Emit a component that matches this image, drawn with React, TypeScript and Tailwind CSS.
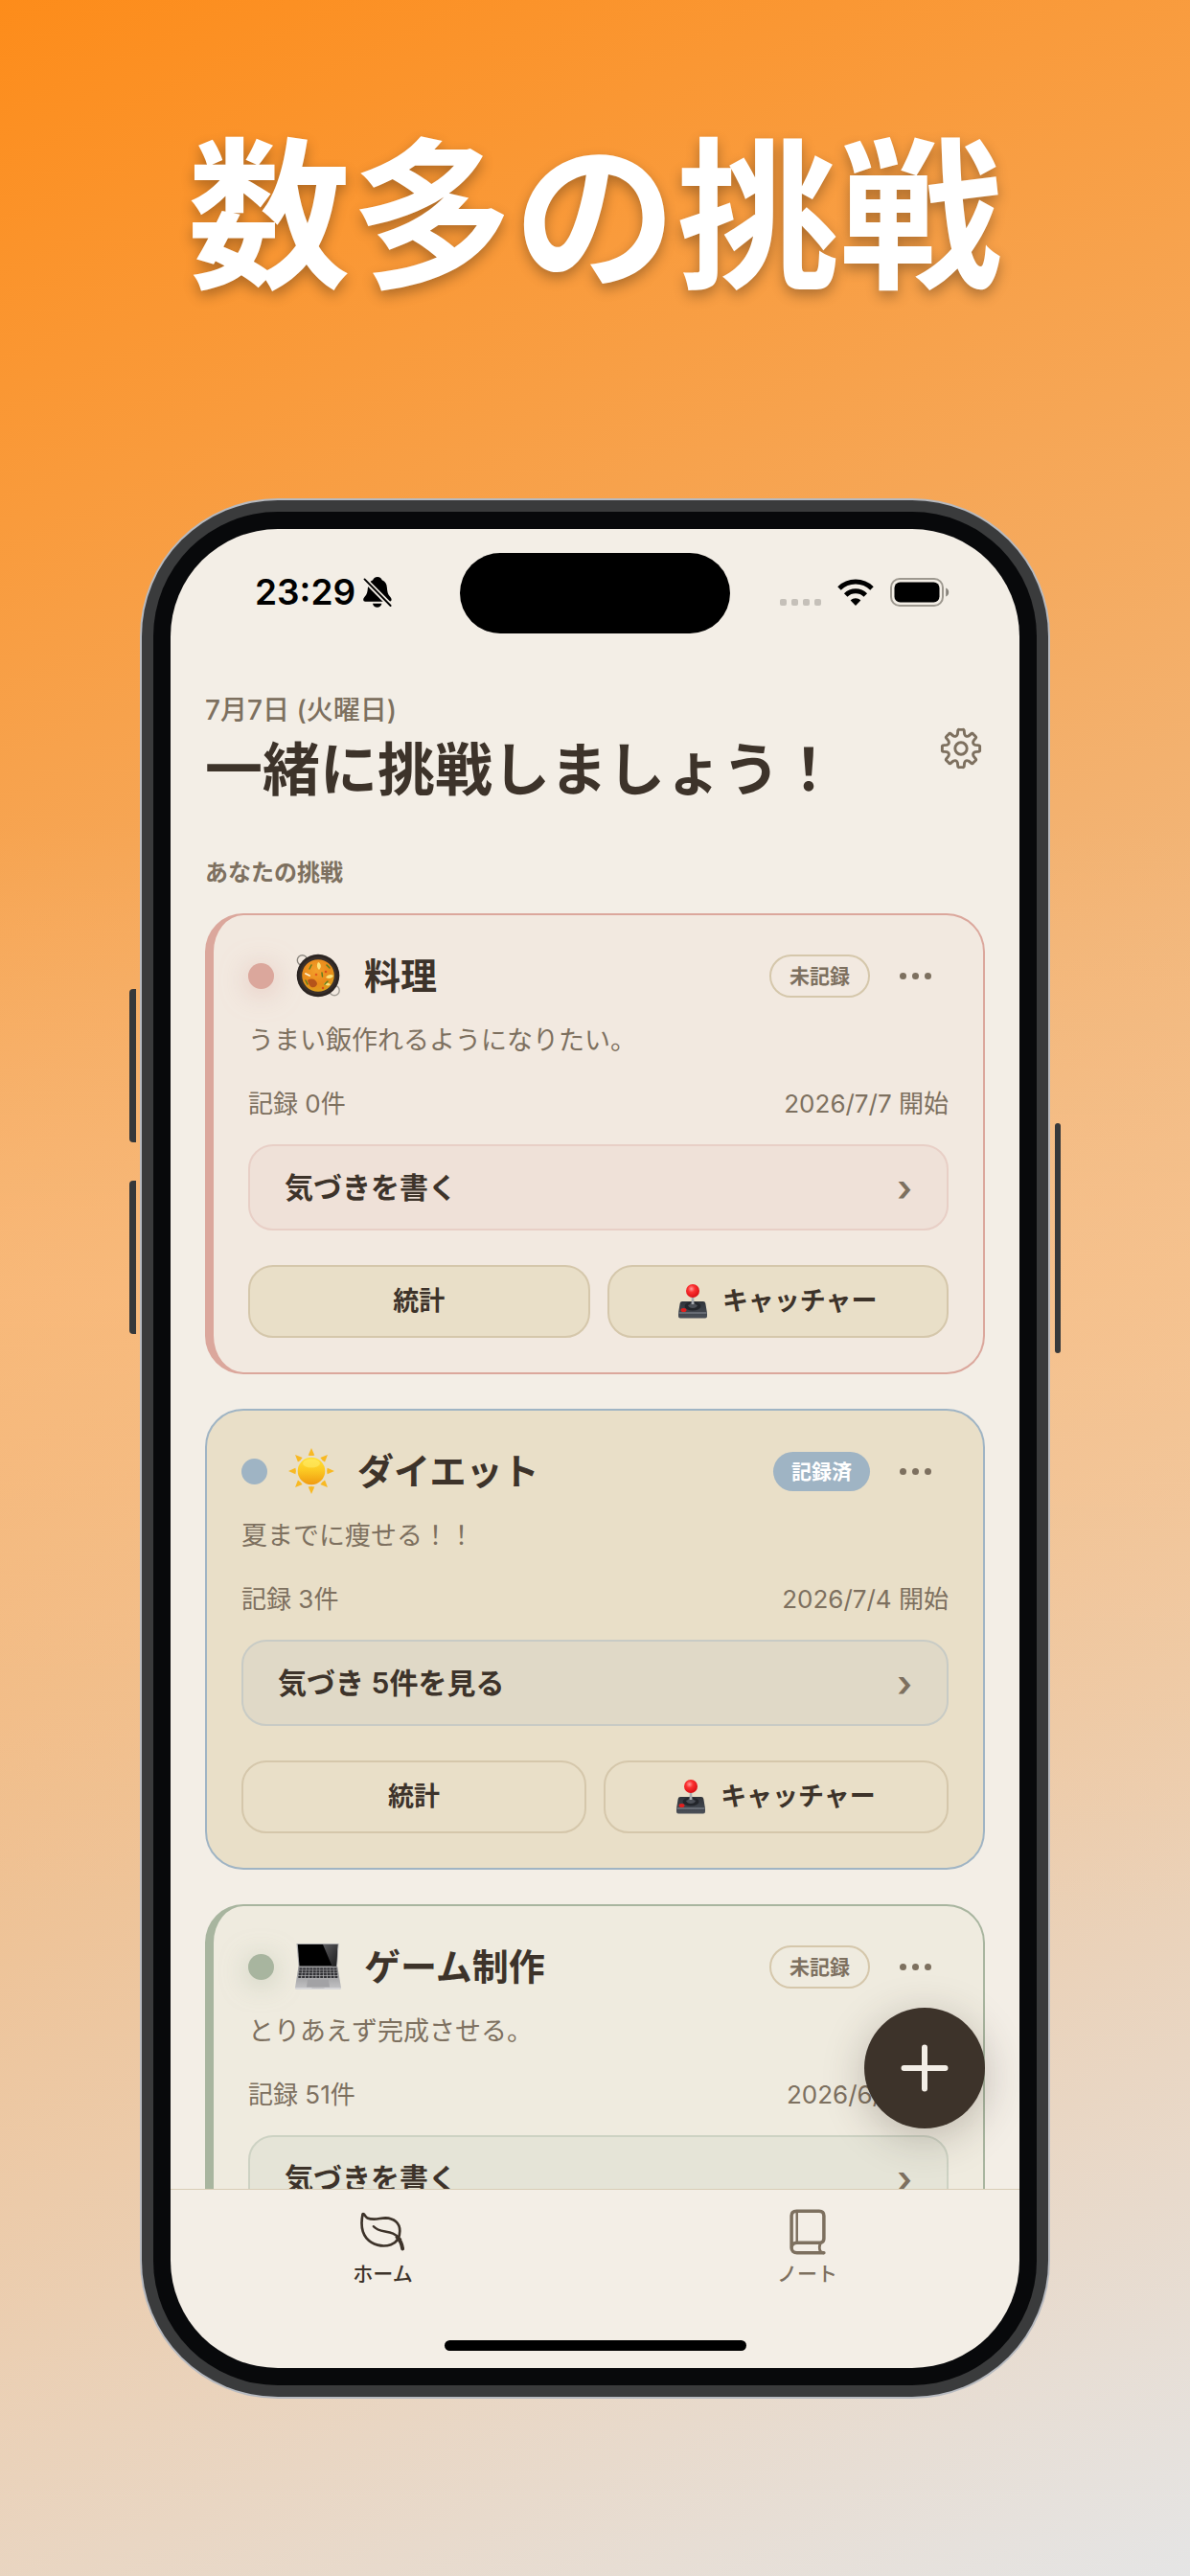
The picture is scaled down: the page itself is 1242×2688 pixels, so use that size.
import React from "react";

type Theme = {
  card: string;
  dot: string;
  note: string;
};

type Challenge = {
  icon: React.ReactNode;
  title: string;
  done: boolean;
  description: string;
  count: number;
  start: string;
  noteLabel: string;
  hasActions: boolean;
  theme: Theme;
};

function BellOff() {
  return (
    <svg viewBox="0 0 30 32" className="h-8 w-[30px]" aria-hidden="true">
      <path
        d="M15 0c2.500 0 4.200 1.500 4.700 3.300 3.300 1.300 5 4.300 5.200 8 .2 4.200 1 6.700 2.700 8.800 1.200 1.400 2 2.500 2 3.700 0 1.200-.9 1.900-2.200 1.900H2.300C1 25.700.2 25 .2 23.800c0-1.200.8-2.300 2-3.700 1.700-2.100 2.500-4.600 2.700-8.800.2-3.700 2-6.700 5.300-8C10.700 1.500 12.500 0 15 0Z"
        fill="#000"
      />
      <path d="M10 27.700h9.400c-.6 2.400-2.300 4-4.700 4s-4.200-1.600-4.700-4Z" fill="#000" />
      <path d="M1.500 2.600 28.600 30" stroke="#f3eee6" strokeWidth="5.400" />
      <path d="M1.500 2.400 28.600 30" stroke="#000" strokeWidth="1.900" strokeLinecap="round" />
    </svg>
  );
}

function Wifi() {
  return (
    <svg viewBox="0 0 38 28" className="h-7 w-[38px]" fill="none" aria-hidden="true">
      <path d="M2 10a24.300 24.300 0 0 1 34 0" stroke="#000" strokeWidth="5" />
      <path d="M8.700 17a14.700 14.700 0 0 1 20.600 0" stroke="#000" strokeWidth="5" />
      <path d="M19 28l-5.300-5.400c2.800-3 7.800-3 10.600 0Z" fill="#000" />
    </svg>
  );
}

function Battery() {
  return (
    <svg viewBox="0 0 62 30" className="h-[30px] w-[62px]" fill="none" aria-hidden="true">
      <rect x="1" y="1" width="54" height="28" rx="9" stroke="#9d988f" strokeWidth="2" />
      <rect x="4.500" y="4.500" width="47" height="21" rx="6" fill="#000" />
      <path d="M58.200 10.500c2 .6 3 2.400 3 4.500s-1 3.900-3 4.500Z" fill="#87837b" />
    </svg>
  );
}

function Gear() {
  const polar = (r: number, deg: number) => {
    const a = ((deg - 90) * Math.PI) / 180;
    return `${(r * Math.cos(a)).toFixed(2)} ${(r * Math.sin(a)).toFixed(2)}`;
  };
  let d = "";
  for (let i = 0; i < 8; i++) {
    const c = i * 45;
    d += `${i === 0 ? "M" : "L"}${polar(17.500, c - 11)} Q${polar(20.300, c - 10)} ${polar(19.700, c - 5)} L${polar(19.700, c + 5)} Q${polar(20.300, c + 10)} ${polar(17.500, c + 11)} L${polar(15.200, c + 14)} Q${polar(12.600, c + 22.500)} ${polar(15.200, c + 31)} `;
  }
  return (
    <svg viewBox="-22 -22 44 44" className="size-11" fill="none" stroke="#7d705f" strokeWidth="2.900" strokeLinejoin="round" aria-hidden="true">
      <path d={d + "Z"} />
      <circle r="6.200" />
    </svg>
  );
}

function Leaf() {
  return (
    <svg viewBox="0 0 132 118" className="h-[42px] w-[47px]" fill="none" stroke="#3d332a" strokeWidth="7.500" strokeLinecap="round" strokeLinejoin="round" aria-hidden="true">
      <path d="M7 7C1 38 4 60 18 77c17 20 47 28 72 19 19-7 26-22 26-40 0-24-18-37-42-38-17 0-34 8-53 0C14 15 11 3 7 7Z" />
      <path d="M39 43c20 23 54 5 79 38" strokeWidth="7" />
      <path d="M108 74c9 9 14 20 16 34" strokeWidth="11" />
    </svg>
  );
}

function Book() {
  return (
    <svg viewBox="0 0 108 136" className="h-12 w-[38px]" fill="none" stroke="#7d705f" strokeLinecap="round" strokeLinejoin="round" aria-hidden="true">
      <path d="M6 116V20C6 10 12 6 21 6h67c9 0 14 5 14 14v68c0 7-3 11-10 12H22c-9 0-16 5-16 15s7 15 16 15h80" strokeWidth="10" />
      <path d="M22 8v91" strokeWidth="7" />
      <path d="M92 101c-4 9-4 18 0 25l8 4" strokeWidth="8" />
    </svg>
  );
}

function PanEmoji() {
  return (
    <svg viewBox="0 0 48 48" className="size-12" fill="none" aria-hidden="true">
      <defs>
        <radialGradient id="curry" cx="0.45" cy="0.35" r="0.7">
          <stop offset="0" stopColor="#f3a02c" />
          <stop offset="0.6" stopColor="#e98a1a" />
          <stop offset="1" stopColor="#d9a21c" />
        </radialGradient>
      </defs>
      <circle cx="7.500" cy="8" r="5.200" stroke="#8d8880" strokeWidth="1.400" />
      <circle cx="41" cy="39.500" r="5.200" stroke="#a39e96" strokeWidth="1.400" />
      <circle cx="24" cy="24" r="22.300" fill="#2c2522" />
      <circle cx="24" cy="24" r="19.500" fill="#3a302b" />
      <circle cx="24" cy="24" r="16.800" fill="url(#curry)" />
      <path d="M13 29c4-3 9-1 10 3 0 3-3 5-6 4-2-1-3-4-4-7Z" fill="#b5541a" />
      <path d="M24 10c3 1 4 5 1 8-2-2-3-5-1-8ZM40 24c-1 3-5 4-8 2 2-3 5-4 8-2ZM37 34c-3 1-6 0-7-2 3-1 6-1 7 2Z" fill="#fbe27b" />
      <path d="m17 13-2 4M28 21l.5 4M34 30l-3 3M33 13l3 3M11 29l2 4" stroke="#5f7d1f" strokeWidth="1.500" strokeLinecap="round" />
      <path d="m11 22 4 2" stroke="#fff0cf" strokeWidth="1.800" strokeLinecap="round" />
      <circle cx="22" cy="23" r="1.300" fill="#e35a1c" />
      <circle cx="32" cy="20" r="1.300" fill="#d9501a" />
      <circle cx="29" cy="37" r="1.200" fill="#d9501a" />
    </svg>
  );
}

function SunEmoji() {
  return (
    <svg viewBox="-24 -24 48 48" className="size-12" aria-hidden="true">
      <defs>
        <linearGradient id="sun" x1="0" y1="0" x2="0" y2="1">
          <stop offset="0" stopColor="#ffe03a" />
          <stop offset="0.45" stopColor="#fccb24" />
          <stop offset="1" stopColor="#f09a10" />
        </linearGradient>
      </defs>
      {[0, 45, 90, 135, 180, 225, 270, 315].map((a) => (
        <path key={a} d="M0-24 3.300-16.600Q0-15.600-3.300-16.600Z" fill="#f8b923" transform={`rotate(${a})`} />
      ))}
      <circle r="14.300" fill="url(#sun)" />
      <ellipse cy="-8" rx="9" ry="4.500" fill="#fff176" opacity="0.5" />
    </svg>
  );
}

function LaptopEmoji() {
  const keys = [0, 1, 2, 3, 4, 5, 6, 7, 8, 9, 10];
  return (
    <svg viewBox="0 0 48 48" className="size-12" aria-hidden="true">
      <defs>
        <linearGradient id="deck" x1="0" y1="0" x2="0" y2="1">
          <stop offset="0" stopColor="#8c8c8e" />
          <stop offset="1" stopColor="#c4c4c6" />
        </linearGradient>
        <linearGradient id="glare" x1="0" y1="0" x2="1" y2="1">
          <stop offset="0" stopColor="#5d5d5f" />
          <stop offset="1" stopColor="#1c1c1d" />
        </linearGradient>
      </defs>
      <path d="M1.500 0h44l-1.500 24H3.500Z" fill="#a9a9ab" />
      <path d="M2.800 1h41.500l-1.300 22.500H4.500Z" fill="#000" />
      <path d="M29 1h15.300L43 23.500h-4.500Z" fill="url(#glare)" />
      <path d="M3.500 24h40.700L48 46q0 2-2 2H2q-2 0-2-2Z" fill="url(#deck)" />
      {[0, 1, 2, 3].map((r) =>
        keys.map((k) => (
          <rect key={`${r}-${k}`} x={4.500 - r * 0.4 + k * (3.600 + r * 0.07)} y={25.500 + r * 2.800} width="3" height="2.100" rx="0.4" fill="#323236" />
        )),
      )}
      <path d="M13 37.500h22l1 8H12Z" fill="#a2a2a5" />
      <path d="M0 46h17l1 1h12l1-1h17q0 2-2 2H2q-2 0-2-2Z" fill="#d6d6d8" />
    </svg>
  );
}

function JoystickEmoji() {
  return (
    <svg viewBox="0 0 30 36" className="h-9 w-[30px]" aria-hidden="true">
      <defs>
        <linearGradient id="stickBase" x1="0" y1="0" x2="0" y2="1">
          <stop offset="0" stopColor="#30343a" />
          <stop offset="1" stopColor="#4b5058" />
        </linearGradient>
        <radialGradient id="knob" cx="0.4" cy="0.35" r="0.65">
          <stop offset="0" stopColor="#ff9a9a" />
          <stop offset="0.4" stopColor="#fb3030" />
          <stop offset="1" stopColor="#d90f14" />
        </radialGradient>
      </defs>
      <path d="M4 18h22q2 0 2.300 2L30 30v3.500q0 2-2 2H2q-2 0-2-2V30l1.700-10Q2 18 4 18Z" fill="url(#stickBase)" />
      <path d="M.5 30h29" stroke="#8b9099" strokeWidth="1" />
      <ellipse cx="15" cy="23" rx="8.500" ry="4.500" fill="#23262b" />
      <path d="M10 22q4-1.500 4-5h2q0 3.500 4 5-1 3-5 3t-5-3Z" fill="#4c5057" />
      <rect x="13.700" y="12" width="2.600" height="9" fill="#a7abb0" />
      <circle cx="15" cy="7" r="7" fill="url(#knob)" />
      <ellipse cx="5.500" cy="27" rx="3" ry="2" fill="#e0201f" />
    </svg>
  );
}

const pink: Theme = {
  card: "border-[#dba79c] border-l-[9px] bg-[#f2e9e0]",
  dot: "bg-[#dba79c] shadow-[0_4px_28px_#dba79c99]",
  note: "border-[#e8cfc6] bg-[#efe1d8]",
};
const blue: Theme = {
  card: "border-[#9fb4c4] bg-[#e9dfc8]",
  dot: "bg-[#9fb4c4]",
  note: "border-[#c8cbc5] bg-[#e0d9c7]",
};
const green: Theme = {
  card: "border-[#a8b59f] border-l-[9px] bg-[#efebdf]",
  dot: "bg-[#a8b59f] shadow-[0_4px_28px_#a8b59f99]",
  note: "border-[#cdd2c3] bg-[#e5e4d7]",
};

const challenges: Challenge[] = [
  { icon: <PanEmoji />, title: "料理", done: false, description: "うまい飯作れるようになりたい。", count: 0, start: "2026/7/7", noteLabel: "気づきを書く", hasActions: true, theme: pink },
  { icon: <SunEmoji />, title: "ダイエット", done: true, description: "夏までに痩せる！！", count: 3, start: "2026/7/4", noteLabel: "気づき 5件を見る", hasActions: true, theme: blue },
  { icon: <LaptopEmoji />, title: "ゲーム制作", done: false, description: "とりあえず完成させる。", count: 51, start: "2026/6/1", noteLabel: "気づきを書く", hasActions: false, theme: green },
];

function ChallengeCard({ item }: { item: Challenge }) {
  const action =
    "flex h-[76px] flex-1 items-center justify-center gap-4 rounded-[26px] border-2 border-[#d5c7ab] bg-[#e9dfc8] text-[27px] font-semibold";
  return (
    <article className={`rounded-[40px] border-2 p-9 ${item.theme.card}`}>
      <div className="flex h-[54px] items-center">
        <span className={`size-[27px] shrink-0 rounded-full ${item.theme.dot}`} />
        <span className="ml-[22px] shrink-0">{item.icon}</span>
        <h3 className="ml-6 flex-1 text-[38px] leading-[54px] font-semibold">{item.title}</h3>
        {item.done ? (
          <span className="rounded-full bg-[#9fb4c4] px-[19px] text-[21px] leading-[41px] font-semibold text-white">記録済</span>
        ) : (
          <span className="rounded-full border-2 border-[#d5c7ab] px-[19px] text-[21px] leading-[41px] font-semibold text-[#7d705f]">未記録</span>
        )}
        <button type="button" aria-label="メニュー" className="ml-3 flex h-[54px] w-[70px] items-center justify-center gap-[6px]">
          <span className="size-[7px] rounded-full bg-[#7d705f]" />
          <span className="size-[7px] rounded-full bg-[#7d705f]" />
          <span className="size-[7px] rounded-full bg-[#7d705f]" />
        </button>
      </div>
      <p className="mt-[21px] text-[27px] leading-10 text-[#7d705f]">{item.description}</p>
      <div className="mt-7 flex justify-between text-[26px] leading-9 text-[#7d705f]">
        <span>記録 {item.count}件</span>
        <span>{item.start} 開始</span>
      </div>
      <button
        type="button"
        className={`mt-6 flex h-[90px] w-full items-center justify-between rounded-[26px] border-2 px-9 text-[30px] font-semibold ${item.theme.note}`}
      >
        <span>{item.noteLabel}</span>
        <span className="text-[38px] text-[#7d705f]">›</span>
      </button>
      {item.hasActions && (
        <div className="mt-9 flex gap-[18px]">
          <button type="button" className={action}>統計</button>
          <button type="button" className={action}>
            <JoystickEmoji />
            <span>キャッチャー</span>
          </button>
        </div>
      )}
    </article>
  );
}

function StatusBar() {
  return (
    <div className="relative flex h-[132px] shrink-0 items-center justify-between pr-[73px] pl-[88px]">
      <div className="flex items-center gap-2 text-black">
        <span className="text-[37px] font-semibold">23:29</span>
        <BellOff />
      </div>
      <div className="absolute inset-x-0 top-[25px] mx-auto h-[84px] w-[282px] rounded-full bg-black" />
      <div className="flex items-center gap-[17px]">
        <div className="flex gap-[5px] pt-5">
          <span className="size-[7px] rounded-xs bg-[#c5c0b9]" />
          <span className="size-[7px] rounded-xs bg-[#c5c0b9]" />
          <span className="size-[7px] rounded-xs bg-[#c5c0b9]" />
          <span className="size-[7px] rounded-xs bg-[#c5c0b9]" />
        </div>
        <Wifi />
        <Battery />
      </div>
    </div>
  );
}

export default function App() {
  return (
    <main
      lang="ja"
      className="flex h-screen flex-col bg-[linear-gradient(180deg,rgba(255,196,138,0)_32%,rgba(255,196,138,0.4)_50%,rgba(255,196,138,0)_75%),linear-gradient(155deg,#fd8c1a_0%,#e5e5e5_100%)] px-[146px] pb-[185px] font-['Inter','Noto_Sans_CJK_JP',sans-serif] text-[#3d332a]"
    >
      <h1 className="-mx-9 pt-[114px] pb-[206px] text-center font-['Noto_Sans_CJK_JP',sans-serif] text-[170px] leading-[200px] font-bold whitespace-nowrap text-white [text-shadow:0_6px_14px_rgba(0,0,0,0.3)]">
        数多の挑戦
      </h1>

      <div className="relative flex min-h-0 flex-1 flex-col rounded-[144px] bg-[#b7bac0] p-[2px]">
        <span className="absolute top-[512px] -left-[11px] h-[160px] w-[7px] rounded-l-sm bg-[#36383a]" />
        <span className="absolute top-[712px] -left-[11px] h-[160px] w-[7px] rounded-l-sm bg-[#36383a]" />
        <span className="absolute top-[652px] -right-[11px] h-[240px] w-[6px] rounded-sm bg-[#36383a]" />
        <div className="flex min-h-0 flex-1 flex-col rounded-[142px] bg-[#3a3b3c] p-3">
          <div className="flex min-h-0 flex-1 flex-col rounded-[130px] bg-[#08090b] p-[18px]">
            <div className="flex min-h-0 flex-1 flex-col overflow-hidden rounded-[112px] bg-[#f3eee6]">
              <StatusBar />

              <div className="relative min-h-0 flex-1">
                <div className="h-full overflow-hidden px-9 pt-[37px]">
                  <header className="flex items-center justify-between">
                    <div>
                      <p className="text-[28px] leading-10 font-medium text-[#7d705f]">7月7日 (火曜日)</p>
                      <h2 className="mt-1 text-[60px] leading-[76px] font-bold">一緒に挑戦しましょう！</h2>
                    </div>
                    <button type="button" aria-label="設定" className="flex size-[50px] items-center justify-center">
                      <Gear />
                    </button>
                  </header>

                  <h3 className="mt-[52px] mb-6 text-[24px] leading-9 font-semibold text-[#7d705f]">あなたの挑戦</h3>
                  <div className="flex flex-col gap-9">
                    {challenges.map((item) => (
                      <ChallengeCard key={item.title} item={item} />
                    ))}
                  </div>
                </div>

                <button
                  type="button"
                  aria-label="挑戦を追加"
                  className="absolute right-9 bottom-[63px] flex size-[126px] items-center justify-center rounded-full bg-[#3d332a] shadow-[0_9px_44px_rgba(61,51,42,0.28)]"
                >
                  <svg viewBox="0 0 50 50" className="size-[50px]" stroke="#f3eee6" strokeWidth="6" strokeLinecap="round" aria-hidden="true">
                    <path d="M25 3.500v43M3.500 25h43" />
                  </svg>
                </button>
              </div>

              <nav className="relative grid h-[187px] shrink-0 grid-cols-2 border-t border-[#d8cdb6] pt-[18px]">
                <a href="#home" className="flex flex-col items-center gap-[2px] text-[21px] leading-8 font-medium">
                  <span className="flex h-[52px] items-center"><Leaf /></span>
                  <span>ホーム</span>
                </a>
                <a href="#notes" className="flex flex-col items-center gap-[2px] text-[21px] leading-8 font-medium text-[#7d705f]">
                  <span className="flex h-[52px] items-center"><Book /></span>
                  <span>ノート</span>
                </a>
                <span className="absolute inset-x-0 bottom-[18px] mx-auto h-[11px] w-[315px] rounded-full bg-black" />
              </nav>
            </div>
          </div>
        </div>
      </div>
    </main>
  );
}
